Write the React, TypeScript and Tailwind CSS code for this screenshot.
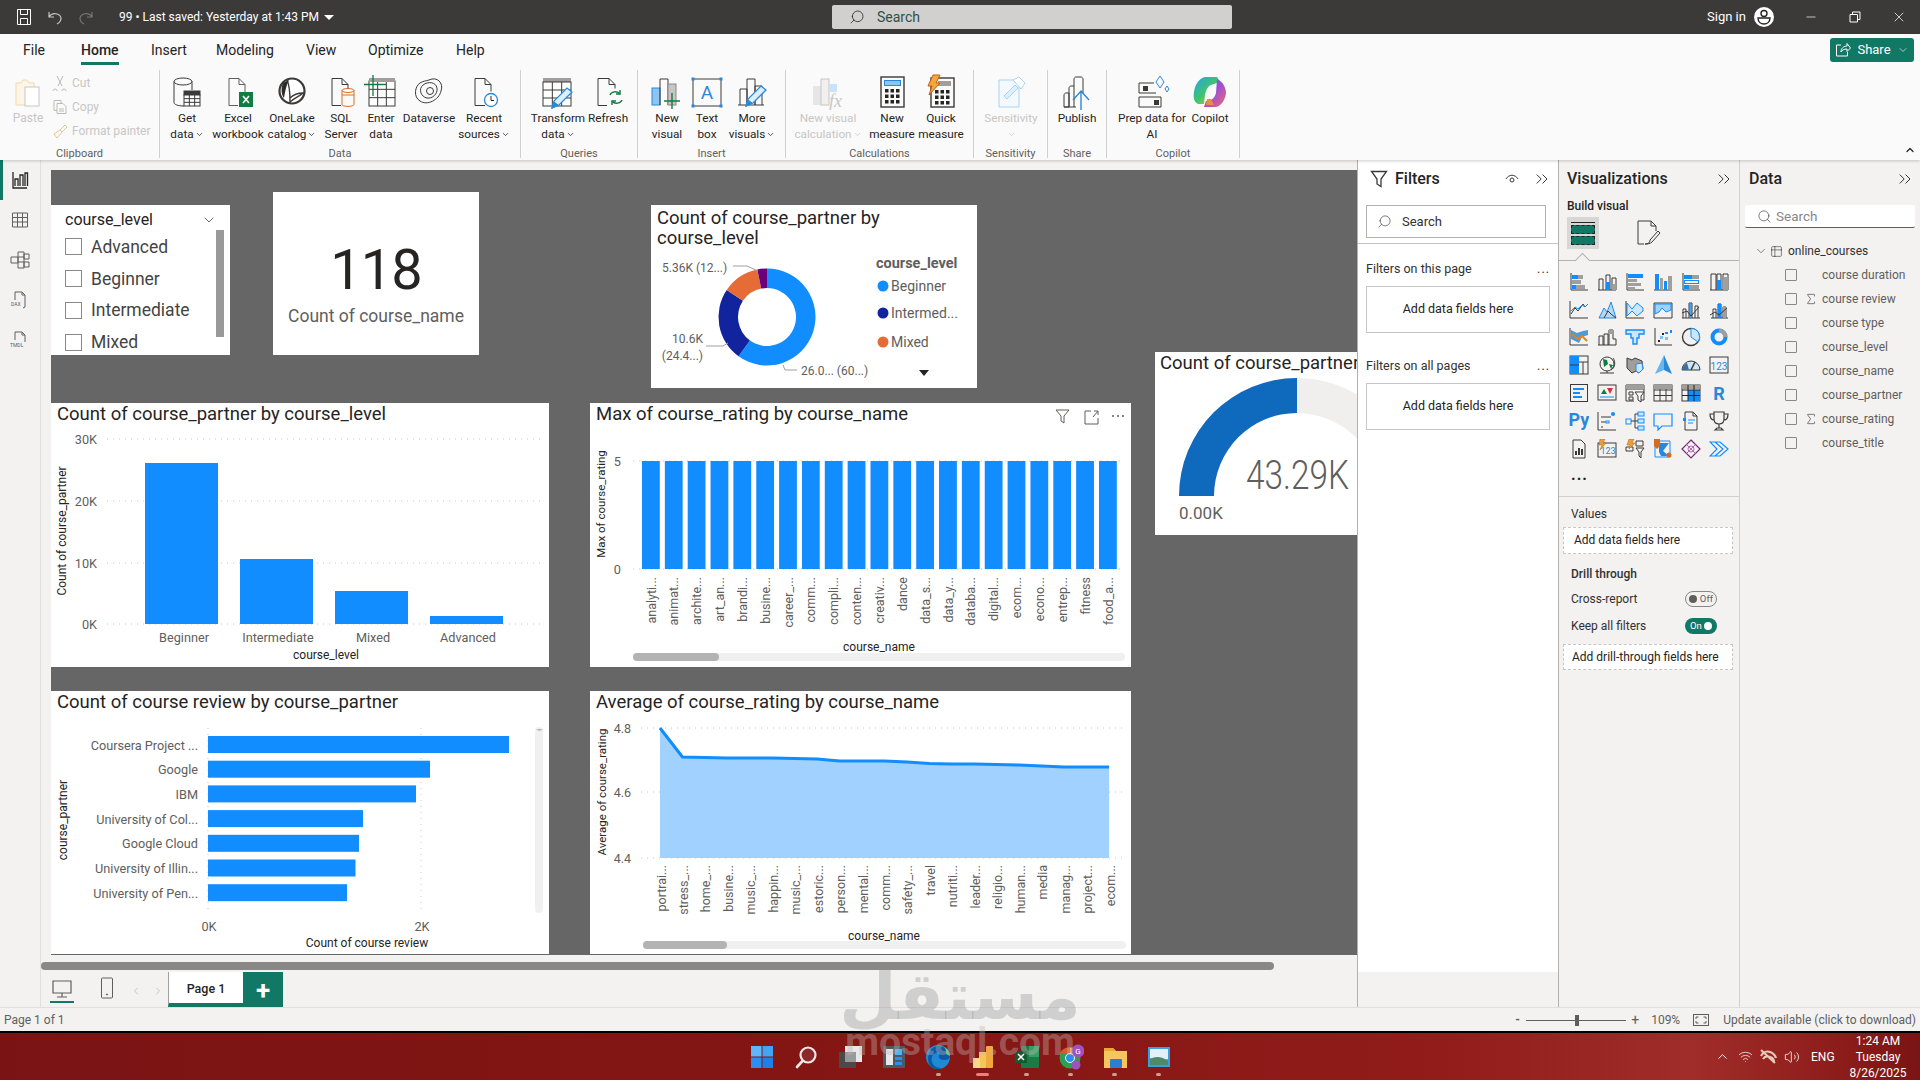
import type { ReactNode } from "react";
import {
  ChevronDown,
  ChevronRight,
  ChevronUp,
  ChevronsRight,
  Minus,
  Search as SearchIcon,
  Sigma,
  Table2,
  Volume2,
  Wifi,
  X,
} from "lucide-react";

const BLUE = "#118dff";
const INK = "#3b3a39";
const FRAME = "#2b88d8";
const GRAY = "#a19f9d";

/* ---------- ribbon icons ---------- */

function Ico({ children }: { children: ReactNode }) {
  return (
    <svg width="36" height="36" viewBox="0 0 36 36" fill="none" stroke={INK} strokeWidth="1">
      {children}
    </svg>
  );
}

const Cells = ({ x, y, w, h, n, m }: { x: number; y: number; w: number; h: number; n: number; m: number }) => (
  <g>
    <rect x={x} y={y} width={w} height={h} fill="#fff" />
    {Array.from({ length: n - 1 }, (_, i) => (
      <path key={i} d={`M${x + ((i + 1) * w) / n} ${y}v${h}`} />
    ))}
    {Array.from({ length: m - 1 }, (_, i) => (
      <path key={i} d={`M${x} ${y + ((i + 1) * h) / m}h${w}`} />
    ))}
  </g>
);

const Pencil = ({ x = 0, y = 0 }: { x?: number; y?: number }) => (
  <g transform={`translate(${x} ${y})`}>
    <path d="M13 32l2-7L28 12l5 4-13 13z" fill="#dcefff" stroke={FRAME} strokeWidth="1.3" />
    <path d="M13 32l2-6 4 3z" fill={FRAME} stroke={FRAME} />
  </g>
);

const Bars = ({ c = INK }: { c?: string }) => (
  <path d="M6 31V15h7v16M13 31V5h8v26M21 31V12h7v19M4 31h26" stroke={c} />
);

const ribbonIcons: Record<string, ReactNode> = {
  paste: (
    <Ico>
      <path d="M6 9h5l2-3h4l2 3h5v22H6z" stroke="#f2d9a8" fill="#fdf6e8" />
      <rect x="15" y="13" width="14" height="19" stroke="#c8c6c4" fill="#fff" />
    </Ico>
  ),
  getData: (
    <Ico>
      <ellipse cx="14" cy="7.5" rx="9" ry="3.5" />
      <path d="M5 7.5v21c0 2 4 3.5 10 3.5M23 7.5V16" />
      <rect x="15" y="17" width="16" height="4" fill={INK} />
      <Cells x={15} y={21} w={16} h={11} n={3} m={3} />
    </Ico>
  ),
  excel: (
    <Ico>
      <path d="M9 4.5h10l6 6v10M19 4.5v6h6M9 4.5v27h9" stroke="#605e5c" />
      <rect x="19" y="18" width="14" height="15" fill="#107c41" stroke="none" />
      <path d="M23 22l6 7M29 22l-6 7" stroke="#fff" strokeWidth="1.6" />
    </Ico>
  ),
  onelake: (
    <Ico>
      <circle cx="18" cy="17" r="12.500" fill="#fff" strokeWidth="2.200" />
      <path d="M13 6c3 6 3 13 3 22 4-4 10-6 13-9-6 0-10 2-13 5" strokeWidth="1.400" />
      <path d="M9 9c-2 5-2 11 1 15 1-6 2-12 5-18z" fill="#2d2c2b" stroke="none" />
    </Ico>
  ),
  sql: (
    <Ico>
      <path d="M9 4.5h10l6 6v4M19 4.5v6h6M9 4.5v27h9" />
      <ellipse cx="25" cy="16.5" rx="6" ry="2" stroke="#d86c1e" />
      <path d="M19 16.5v14c0 2.500 12 2.500 12 0v-14M19 21h12" stroke="#d86c1e" />
    </Ico>
  ),
  enter: (
    <Ico>
      <Cells x={6} y={7} w={26} h={25} n={3} m={3} />
      <rect x="6" y="4" width="26" height="4" fill={GRAY} stroke="none" />
      <path d="M1 10.500h22M10 1v21" stroke="#107c41" strokeWidth="1.3" />
    </Ico>
  ),
  dataverse: (
    <Ico>
      <path d="M18 6c8-4 15 3 12 11-2 9-14 15-21 10-7-4-5-15 0-18 3-2 6-2 9-3z" />
      <path d="M12 11c5-4 13-3 14 3 1 6-5 11-10 10-6-1-9-9-4-13z" />
      <circle cx="19" cy="17" r="3.500" />
    </Ico>
  ),
  recent: (
    <Ico>
      <path d="M9 4.500h10l6 6v7M19 4.500v6h6M9 4.500v27h10" />
      <circle cx="25" cy="26" r="6.500" stroke={FRAME} strokeWidth="1.3" fill="#fff" />
      <path d="M25 22v4.500h3" stroke="#252423" />
    </Ico>
  ),
  transform: (
    <Ico>
      <rect x="3" y="4" width="28" height="4" fill={GRAY} stroke="none" />
      <Cells x={3} y={8} w={28} h={24} n={3} m={3} />
      <Pencil x={-1} y={2} />
    </Ico>
  ),
  refresh: (
    <Ico>
      <path d="M8 4.500h11l6 6v4M19 4.500v6h6M8 4.500v27h9" />
      <path d="M20 21c1-3 7-5 10-1M32 26c-1 3-7 5-10 1" stroke="#107c41" strokeWidth="1.400" />
      <path d="M30 16v4h-4M22 31v-4h4" stroke="#107c41" strokeWidth="1.400" />
    </Ico>
  ),
  newVisual: (
    <Ico>
      <rect x="3" y="14" width="8" height="17" fill="#8cc4f2" stroke={FRAME} />
      <path d="M11 31V5h8v26" />
      <rect x="19" y="10" width="8" height="21" fill="#c8c6c4" stroke="#8a8886" />
      <path d="M15 27h16M23 19v16" stroke="#107c41" strokeWidth="1.400" />
    </Ico>
  ),
  textBox: (
    <Ico>
      <rect x="4" y="5" width="28" height="27" />
      <g fill={FRAME} stroke="none">
        <rect x="2.500" y="3.500" width="3" height="3" />
        <rect x="30.500" y="3.500" width="3" height="3" />
        <rect x="2.500" y="30.500" width="3" height="3" />
        <rect x="30.500" y="30.500" width="3" height="3" />
      </g>
      <text x="18" y="25" textAnchor="middle" fontSize="19" fill={FRAME} stroke="none">A</text>
    </Ico>
  ),
  moreVisuals: (
    <Ico>
      <Bars />
      <Pencil x={-1} y={0} />
    </Ico>
  ),
  visualCalc: (
    <Ico>
      <rect x="3" y="12" width="8" height="19" fill="#e6e6e6" stroke="none" />
      <rect x="11" y="5" width="8" height="26" fill="#f0f0f0" stroke="#c8c6c4" />
      <rect x="19" y="10" width="8" height="8" fill="#c7e3fa" stroke="none" />
      <text x="19" y="33" fontSize="18" fontStyle="italic" fontFamily="Liberation Serif" fill="#c8c6c4" stroke="none">fx</text>
    </Ico>
  ),
  measure: (
    <Ico>
      <rect x="7" y="3" width="23" height="30" strokeWidth="1.400" />
      <rect x="10.500" y="6.500" width="16" height="5" fill="#8cc4f2" stroke={FRAME} />
      <g fill="#252423" stroke="none">
        {[15, 20.5, 26].flatMap((y) =>
          [11, 16.5, 22].map((x) => <rect key={`${x}-${y}`} x={x} y={y} width="3.500" height="3.500" />),
        )}
      </g>
    </Ico>
  ),
  quick: (
    <Ico>
      <rect x="8" y="4" width="23" height="29" strokeWidth="1.400" />
      <rect x="15" y="7" width="13" height="5" fill={GRAY} stroke="none" />
      <g fill="#252423" stroke="none">
        {[16, 21.5, 27].flatMap((y) =>
          [12, 17.5, 23].map((x) => <rect key={`${x}-${y}`} x={x} y={y} width="3.500" height="3.500" />),
        )}
      </g>
      <path d="M10 1h7l-4 8h4L6 21l3-9H5z" fill="#f2a93b" stroke="#c55a11" />
    </Ico>
  ),
  sensitivity: (
    <Ico>
      <path d="M6 6h15l5 4v23H6z" stroke="#a6d3f5" fill="#f3f9fe" />
      <path d="M11 22l11-11 3 3-11 11z" stroke="#a6d3f5" fill="#deeefb" />
      <path d="M20 6l6-3 6 6-4 6z" stroke="#a6d3f5" fill="#fff" />
    </Ico>
  ),
  publish: (
    <Ico>
      <path d="M5 33V21c0-1 1-2 2-2h3v14zM10 33V14c0-1 1-2 2-2h3v21M15 12V5c0-1 1-2 2-2h5c1 0 2 1 2 2v14M5 33h12" />
      <path d="M22 36V17M14 26l8-9 8 9" stroke={FRAME} strokeWidth="1.400" />
    </Ico>
  ),
  prep: (
    <Ico>
      <path d="M5 9h15M5 9v10h17M5 23h22v10H5z" />
      <rect x="9" y="12" width="5" height="5" fill="#3b3a39" stroke="none" />
      <rect x="20" y="26" width="5" height="5" fill="#3b3a39" stroke="none" />
      <path d="M26 2l4 6-4 6-4-6zM33 12l2 3-2 3-2-3z" stroke={FRAME} />
    </Ico>
  ),
  copilot: (
    <svg width="36" height="36" viewBox="0 0 36 36">
      <defs>
        <linearGradient id="cp1" x1="0" y1="0" x2="1" y2="1">
          <stop offset="0" stopColor="#2aa0f0" />
          <stop offset="0.500" stopColor="#3ec46d" />
          <stop offset="1" stopColor="#f6c02c" />
        </linearGradient>
        <linearGradient id="cp2" x1="0" y1="0" x2="1" y2="1">
          <stop offset="0" stopColor="#3a6ff0" />
          <stop offset="0.500" stopColor="#a24fd0" />
          <stop offset="1" stopColor="#ef6c6c" />
        </linearGradient>
      </defs>
      <path d="M14 3h11l3 5-9 3c-4 2-5 6-6 10l-1 9H6c-4-2-5-7-4-12C3 10 8 3 14 3z" fill="url(#cp1)" />
      <path d="M25 5c4 2 8 5 9 13 0 7-5 15-11 15H12l2-6c5 0 9-3 10-8l1-14z" fill="url(#cp2)" />
      <path d="M14 31h8l-3-6h-4z" fill="#f08a3c" />
    </svg>
  ),
};

/* ---------- ribbon ---------- */

type RibbonItem = { key: string; w: string; lines: string[]; chev?: boolean; off?: boolean };
type RibbonGroup = { label: string; w: string; pl: string; items: RibbonItem[] };

const groups: RibbonGroup[] = [
  {
    label: "Data",
    w: "w-[361px]",
    pl: "pl-[2px]",
    items: [
      { key: "getData", w: "w-[50px]", lines: ["Get", "data"], chev: true },
      { key: "excel", w: "w-[52px]", lines: ["Excel", "workbook"] },
      { key: "onelake", w: "w-[56px]", lines: ["OneLake", "catalog"], chev: true },
      { key: "sql", w: "w-[42px]", lines: ["SQL", "Server"] },
      { key: "enter", w: "w-[38px]", lines: ["Enter", "data"] },
      { key: "dataverse", w: "w-[58px]", lines: ["Dataverse"] },
      { key: "recent", w: "w-[52px]", lines: ["Recent", "sources"], chev: true },
    ],
  },
  {
    label: "Queries",
    w: "w-[117px]",
    pl: "pl-[5px]",
    items: [
      { key: "transform", w: "w-[64px]", lines: ["Transform", "data"], chev: true },
      { key: "refresh", w: "w-[36px]", lines: ["Refresh"] },
    ],
  },
  {
    label: "Insert",
    w: "w-[148px]",
    pl: "pl-[9px]",
    items: [
      { key: "newVisual", w: "w-[40px]", lines: ["New", "visual"] },
      { key: "textBox", w: "w-[40px]", lines: ["Text", "box"] },
      { key: "moreVisuals", w: "w-[50px]", lines: ["More", "visuals"], chev: true },
    ],
  },
  {
    label: "Calculations",
    w: "w-[188px]",
    pl: "pl-[6px]",
    items: [
      { key: "visualCalc", w: "w-[72px]", lines: ["New visual", "calculation"], chev: true, off: true },
      { key: "measure", w: "w-[56px]", lines: ["New", "measure"] },
      { key: "quick", w: "w-[42px]", lines: ["Quick", "measure"] },
    ],
  },
  {
    label: "Sensitivity",
    w: "w-[74px]",
    pl: "pl-[3px]",
    items: [{ key: "sensitivity", w: "w-[68px]", lines: ["Sensitivity", ""], chev: true, off: true }],
  },
  {
    label: "Share",
    w: "w-[59px]",
    pl: "pl-[2px]",
    items: [{ key: "publish", w: "w-[54px]", lines: ["Publish"] }],
  },
  {
    label: "Copilot",
    w: "w-[133px]",
    pl: "pl-[6px]",
    items: [
      { key: "prep", w: "w-[78px]", lines: ["Prep data for", "AI"] },
      { key: "copilot", w: "w-[38px]", lines: ["Copilot"] },
    ],
  },
];

function Group({ label, w, children }: { label: string; w: string; children: ReactNode }) {
  return (
    <div className={`flex h-[88px] shrink-0 flex-col border-r border-[#d2d0ce] ${w}`}>
      <div className="flex h-[77px] shrink-0">{children}</div>
      <div className="h-[11px] text-center text-[11px] leading-[14px] text-[#605e5c]">{label}</div>
    </div>
  );
}

function Item({ item }: { item: RibbonItem }) {
  return (
    <div className={`flex shrink-0 flex-col items-center pt-[4px] ${item.w}`}>
      {ribbonIcons[item.key]}
      <div className={`text-center text-[11.750px] leading-[16px] whitespace-nowrap ${item.off ? "text-[#c8c6c4]" : "text-[#252423]"}`}>
        {item.lines.map((l, i) => (
          <div key={i} className="h-[16px]">
            {l}
            {item.chev && i === item.lines.length - 1 && <ChevronDown size={9} className="ml-[1px] inline" />}
          </div>
        ))}
      </div>
    </div>
  );
}

function TitleBar() {
  return (
    <div className="flex h-[34px] shrink-0 items-center bg-[#3b3a39] text-white">
      <svg width="16" height="18" viewBox="0 0 16 18" fill="none" stroke="#fff" className="ml-[16px]">
        <path d="M1.500 1.500h13v15h-13zM4.500 1.500v5h7v-5M4.500 16.500v-6h7v6" />
      </svg>
      <svg width="16" height="16" viewBox="0 0 16 16" fill="none" stroke="#c8c6c4" strokeWidth="1.200" className="ml-[15px]">
        <path d="M2 3v5h5M2 8c3-5 11-4 12 1 0 3-2 5-4 6" />
      </svg>
      <svg width="16" height="16" viewBox="0 0 16 16" fill="none" stroke="#777" strokeWidth="1.200" className="ml-[15px]">
        <path d="M14 3v5H9M14 8C11 3 3 4 2 9c0 3 2 5 4 6" />
      </svg>
      <div className="ml-[25px] w-[198px] text-[12px] whitespace-nowrap">99 • Last saved: Yesterday at 1:43 PM</div>
      <div className="ml-[7px] h-0 w-0 border-x-[5px] border-t-[5px] border-x-transparent border-t-white" />
      <div className="ml-[498px] flex h-[24px] w-[400px] items-center rounded-[2px] bg-[#d2d0ce] pl-[17px]">
        <SearchIcon size={16} strokeWidth={1.200} className="-scale-x-100 text-[#252423]" />
        <span className="ml-[12px] text-[14px] text-[#2f4f46]">Search</span>
      </div>
      <span className="ml-[475px] text-[13px]">Sign in</span>
      <svg width="20" height="20" viewBox="0 0 20 20" className="ml-[8px]">
        <circle cx="10" cy="10" r="10" fill="#fff" />
        <circle cx="10" cy="6.500" r="3" fill="none" stroke="#252423" strokeWidth="1.400" />
        <path d="M4 11h12c0 4-3 6-6 6s-6-2-6-6z" fill="none" stroke="#252423" strokeWidth="1.400" />
      </svg>
      <Minus size={14} strokeWidth={1.200} className="ml-[30px]" />
      <svg width="12" height="12" viewBox="0 0 12 12" fill="none" stroke="#fff" className="ml-[31px]">
        <path d="M1 3.500h7.500v7.500H1zM3.500 3.500V1H11v7.500H8.500" />
      </svg>
      <X size={16} strokeWidth={1.100} className="ml-[30px]" />
    </div>
  );
}

function Ribbon() {
  const tabs = [
    ["File", "w-[58px]"],
    ["Home", "w-[70px]"],
    ["Insert", "w-[65px]"],
    ["Modeling", "w-[90px]"],
    ["View", "w-[62px]"],
    ["Optimize", "w-[88px]"],
    ["Help", "w-[50px]"],
  ];
  return (
    <div className="relative z-10 h-[126px] shrink-0 bg-[#fafafa] shadow-[0_1px_3px_rgba(0,0,0,0.2)]">
      <div className="flex h-[36px] items-start pl-[23px]">
        {tabs.map(([t, w]) => (
          <div key={t} className={`${w} h-[31px] shrink-0`}>
            <div
              className={`inline-block h-[31px] pt-[7px] text-[14px] leading-[18px] text-[#252423] ${
                t === "Home" ? "border-b-[3px] border-[#117865] font-medium" : ""
              }`}
            >
              {t}
            </div>
          </div>
        ))}
        <div className="mt-[4px] ml-auto mr-[6px] flex h-[24px] w-[84px] items-center justify-center gap-[6px] rounded-[3px] bg-[#117865] text-[13px] text-white">
          <svg width="16" height="16" viewBox="0 0 16 16" fill="none" stroke="#fff">
            <path d="M6 3H1.500v11h11V10M6 10c0-4 3-6 6-6V1.500L15.500 6 12 9.500V7C9 7 7 8 6 10z" />
          </svg>
          Share
          <ChevronDown size={12} strokeWidth={1.200} />
        </div>
      </div>
      <div className="flex">
        <Group label="Clipboard" w="w-[160px]">
          <div className="flex w-[50px] shrink-0 flex-col items-center pt-[4px] pl-[6px] text-[12px] leading-[16px] text-[#c8c6c4]">
            {ribbonIcons.paste}
            Paste
          </div>
          <div className="flex flex-col pt-px pl-[2px] text-[12px] text-[#c8c6c4]">
            {["Cut", "Copy", "Format painter"].map((t, i) => (
              <div key={t} className="flex h-[24px] items-center gap-[4px]">
                <svg width="16" height="16" viewBox="0 0 16 16" fill="none" stroke={i === 2 ? "#e3c49a" : "#bcbbb9"}>
                  {i === 0 && <path d="M5 1l5 10M11 1L6 11M3 14a2 2 0 1 0 .1 0M12 14a2 2 0 1 0 .1 0" />}
                  {i === 1 && <path d="M2 1.500h7v3M5 4.500h6l3 3v7H5zM2 1.500v10h3M7 10h5M7 12h5" />}
                  {i === 2 && <path d="M8 7l5-5 2 2-5 5zM8 7L2 11l3 4 5-6" />}
                </svg>
                {t}
              </div>
            ))}
          </div>
        </Group>
        {groups.map((g) => (
          <Group key={g.label} label={g.label} w={g.w}>
            <div className={`flex ${g.pl}`}>
              {g.items.map((it) => (
                <Item key={it.key} item={it} />
              ))}
            </div>
          </Group>
        ))}
        <ChevronUp size={12} strokeWidth={2.500} className="ml-auto mt-[74px] mr-[4px] text-[#252423]" />
      </div>
    </div>
  );
}

/* ---------- chart helpers ---------- */

function T({
  x,
  y,
  s = 12.7,
  a = "start",
  c = "#605e5c",
  w = 400,
  v = false,
  children,
}: {
  x: number;
  y: number;
  s?: number;
  a?: "start" | "middle" | "end";
  c?: string;
  w?: number;
  v?: boolean;
  children: ReactNode;
}) {
  return (
    <text
      x={x}
      y={y}
      fontSize={s}
      textAnchor={a}
      dominantBaseline="central"
      fill={c}
      fontWeight={w}
      transform={v ? `rotate(-90 ${x} ${y})` : undefined}
    >
      {children}
    </text>
  );
}

const Grid = ({ x1, x2, y }: { x1: number; x2: number; y: number }) => (
  <path d={`M${x1} ${y}H${x2}`} stroke="#c8c6c4" strokeDasharray="1 5" />
);

function arc(cx: number, cy: number, r0: number, r1: number, a0: number, a1: number) {
  const p = (r: number, a: number) => `${cx + r * Math.sin(a)} ${cy - r * Math.cos(a)}`;
  const large = a1 - a0 > Math.PI ? 1 : 0;
  return `M${p(r1, a0)}A${r1} ${r1} 0 ${large} 1 ${p(r1, a1)}L${p(r0, a1)}A${r0} ${r0} 0 ${large} 0 ${p(r0, a0)}Z`;
}

/* Visuals live on the report canvas, so their place on it is free-form. SVGs use page coordinates. */
function Visual({ pos, box, children }: { pos: string; box: string; children: ReactNode }) {
  return (
    <div className={`absolute bg-white ${pos}`}>
      <svg className="block h-full w-full" viewBox={box}>
        {children}
      </svg>
    </div>
  );
}

function ColumnChart() {
  const bars = [
    [145, 463],
    [240, 559],
    [335, 591],
    [430, 616],
  ];
  return (
    <Visual pos="left-0 top-[233px] h-[264px] w-[498px]" box="51 403 498 264">
      <T x={57} y={414} s={18.5} c="#252423">Count of course_partner by course_level</T>
      {[[439, "30K"], [501, "20K"], [563, "10K"], [624, "0K"]].map(([y, l]) => (
        <g key={l}>
          <Grid x1={107} x2={545} y={y as number} />
          <T x={97} y={y as number} a="end">{l}</T>
        </g>
      ))}
      {bars.map(([x, y]) => (
        <rect key={x} x={x} y={y} width="73" height={624 - y} fill={BLUE} />
      ))}
      {[[184, "Beginner"], [278, "Intermediate"], [373, "Mixed"], [468, "Advanced"]].map(([x, l]) => (
        <T key={l} x={x as number} y={637} a="middle">{l}</T>
      ))}
      <T x={326} y={655} a="middle" s={12} c="#252423">course_level</T>
      <T x={62} y={531} a="middle" s={12} c="#252423" v>Count of course_partner</T>
    </Visual>
  );
}

function DonutCard() {
  const cx = 767;
  const cy = 317;
  const slices: [number, number, string][] = [
    [0, 0.6, BLUE],
    [0.6, 0.844, "#12239e"],
    [0.844, 0.968, "#e66c37"],
    [0.968, 1, "#6b007b"],
  ];
  const tau = Math.PI * 2;
  return (
    <Visual pos="left-[600px] top-[35px] h-[183px] w-[326px]" box="651 205 326 183">
      <T x={657} y={218} s={18.5} c="#252423">Count of course_partner by</T>
      <T x={657} y={238} s={18.5} c="#252423">course_level</T>
      {slices.map(([a, b, c]) => (
        <path key={c} d={arc(cx, cy, 29, 48.5, a * tau, b * tau)} fill={c} />
      ))}
      <T x={662} y={268} s={12}>5.36K (12...)</T>
      <path d="M733 266h14l11 5" stroke="#a19f9d" fill="none" />
      <T x={703} y={339} a="end" s={12}>10.6K</T>
      <T x={703} y={356} a="end" s={12}>(24.4...)</T>
      <path d="M706 346h17l5-3" stroke="#a19f9d" fill="none" />
      <T x={801} y={371} s={12}>26.0... (60...)</T>
      <path d="M783 365l2 5h12" stroke="#a19f9d" fill="none" />
      <T x={876} y={263} s={14.5} w={700} c="#605e5c">course_level</T>
      {[
        [286, BLUE, "Beginner"],
        [313, "#12239e", "Intermed..."],
        [342, "#e66c37", "Mixed"],
      ].map(([y, c, l]) => (
        <g key={l}>
          <circle cx={883} cy={y as number} r="5.500" fill={c as string} />
          <T x={891} y={y as number} s={14}>{l}</T>
        </g>
      ))}
      <path d="M919 370h10l-5 6z" fill="#252423" />
    </Visual>
  );
}

const maxLabels = [
  "analyti...", "animat...", "archite...", "art_an...", "brandi...", "busine...", "career_...",
  "comm...", "compli...", "conten...", "creativ...", "dance", "data_s...", "data_y...",
  "databa...", "digital...", "ecom...", "econo...", "entrep...", "fitness", "food_a...",
];

function MaxChart() {
  return (
    <Visual pos="left-[539px] top-[233px] h-[264px] w-[541px]" box="590 403 541 264">
      <T x={596} y={414} s={18.5} c="#252423">Max of course_rating by course_name</T>
      <path d="M1056 410h13l-5 6v7l-3-2v-5z" fill="none" stroke="#605e5c" />
      <path d="M1085 411h6M1085 411v13h13v-6M1093 417l5-6M1094 411h4v4" fill="none" stroke="#605e5c" />
      <g fill="#605e5c">
        <circle cx="1113" cy="416" r="1" />
        <circle cx="1118" cy="416" r="1" />
        <circle cx="1123" cy="416" r="1" />
      </g>
      <Grid x1={633} x2={1123} y={461} />
      <Grid x1={633} x2={1123} y={569} />
      <T x={621} y={461} a="end">5</T>
      <T x={621} y={569} a="end">0</T>
      <T x={601} y={504} a="middle" s={11.5} c="#252423" v>Max of course_rating</T>
      {maxLabels.map((l, i) => {
        const x = 642 + i * 22.85;
        return (
          <g key={i}>
            <rect x={x} y={461} width="17.800" height="108" fill={BLUE} />
            <T x={x + 9} y={577} a="end" s={12.5} v>{l}</T>
          </g>
        );
      })}
      <T x={879} y={647} a="middle" s={12} c="#252423">course_name</T>
      <rect x="633" y="653" width="492" height="8" rx="4" fill="#f0f0f0" />
      <rect x="633" y="653" width="86" height="8" rx="4" fill="#b3b3b3" />
    </Visual>
  );
}

function GaugeCard() {
  const tau = Math.PI * 2;
  return (
    <Visual pos="left-[1104px] top-[182px] h-[183px] w-[326px]" box="1155 352 326 183">
      <T x={1160} y={363} s={18.5} c="#252423">Count of course_partner by course_level</T>
      <path d={arc(1297, 496, 83, 118, -tau / 4, tau / 4)} fill="#f1efee" />
      <path d={arc(1297, 496, 83, 118, -tau / 4, 0)} fill="#0f69bd" />
      {/* the gauge figure is much narrower than Roboto, so squeeze it to the measured width */}
      <text
        x={1246}
        y={475}
        fontSize={41}
        fontWeight={300}
        fill="#605e5c"
        dominantBaseline="central"
        textLength={103}
        lengthAdjust="spacingAndGlyphs"
      >
        43.29K
      </text>
      <T x={1179} y={513} s={17}>0.00K</T>
    </Visual>
  );
}

function PartnerChart() {
  const rows: [string, number][] = [
    ["Coursera Project ...", 509],
    ["Google", 430],
    ["IBM", 416],
    ["University of Col...", 363],
    ["Google Cloud", 359],
    ["University of Illin...", 355.5],
    ["University of Pen...", 347],
  ];
  return (
    <Visual pos="left-0 top-[521px] h-[263px] w-[498px]" box="51 691 498 263">
      <T x={57} y={702} s={18.5} c="#252423">Count of course review by course_partner</T>
      <path d="M208 728v185M421 728v185" stroke="#c8c6c4" strokeDasharray="1 5" />
      {rows.map(([l, r], i) => (
        <g key={l}>
          <rect x={208} y={736 + i * 24.7} width={r - 208} height="17" fill={BLUE} />
          <T x={198} y={745 + i * 24.7} a="end" s={12.7}>{l}</T>
        </g>
      ))}
      <T x={209} y={926} a="middle">0K</T>
      <T x={422} y={926} a="middle">2K</T>
      <T x={367} y={943} a="middle" s={12} c="#252423">Count of course review</T>
      <T x={63} y={820} a="middle" s={12} c="#252423" v>course_partner</T>
      <rect x="535" y="727" width="8" height="186" rx="4" fill="#f0f0f0" />
      <path d="M536 729h7l-3.500 2z" fill="#b3b3b3" />
    </Visual>
  );
}

const areaLabels = [
  "portrai...", "stress_...", "home_...", "busine...", "music_...", "happin...", "music_...",
  "estoric...", "person...", "mental...", "comm...", "safety_...", "travel", "nutriti...",
  "leader...", "religio...", "human...", "media", "manag...", "project...", "ecom...",
];
const areaY = [728, 757, 757.5, 758, 758, 758, 758.5, 759, 761, 761, 761, 762, 763.5, 764, 764, 764.5, 765, 766, 767, 767, 767];

function AreaChart() {
  const xs = areaY.map((_, i) => 660 + i * 22.45);
  const line = areaY.map((y, i) => `${i ? "L" : "M"}${xs[i]} ${y}`).join("");
  return (
    <Visual pos="left-[539px] top-[521px] h-[263px] w-[541px]" box="590 691 541 263">
      <T x={596} y={702} s={18.5} c="#252423">Average of course_rating by course_name</T>
      {[[728, "4.8"], [792, "4.6"], [858, "4.4"]].map(([y, l]) => (
        <g key={l}>
          <Grid x1={641} x2={1124} y={y as number} />
          <T x={631} y={y as number} a="end" s={12.5}>{l}</T>
        </g>
      ))}
      <path d={`${line}L1109 858L660 858Z`} fill="#a0d1ff" />
      <path d={line} fill="none" stroke={BLUE} strokeWidth="3" />
      <T x={602} y={792} a="middle" s={11.5} c="#252423" v>Average of course_rating</T>
      {areaLabels.map((l, i) => (
        <T key={i} x={xs[i] + 1} y={865} a="end" s={12.5} v>{l}</T>
      ))}
      <T x={884} y={936} a="middle" s={12} c="#252423">course_name</T>
      <rect x="643" y="941" width="483" height="8" rx="4" fill="#f0f0f0" />
      <rect x="643" y="941" width="84" height="8" rx="4" fill="#b3b3b3" />
    </Visual>
  );
}

function Slicer() {
  return (
    <div className="absolute left-0 top-[35px] flex h-[150px] w-[179px] flex-col overflow-hidden bg-white pl-[14px] text-[#252423]">
      <div className="flex h-[26px] shrink-0 items-center pt-[4px] text-[16px]">
        course_level
        <ChevronDown size={16} strokeWidth={1} className="ml-[48px]" />
      </div>
      <div className="flex">
        <div className="flex w-[151px] flex-col">
          {["Advanced", "Beginner", "Intermediate", "Mixed"].map((l) => (
            <div key={l} className="flex h-[31.800px] items-center gap-[9px] text-[17.500px] text-[#444]">
              <span className="h-[17px] w-[17px] shrink-0 border border-[#8a8886]" />
              {l}
            </div>
          ))}
        </div>
        <div className="mt-[-1px] h-[107px] w-[8px] bg-[#999]" />
      </div>
    </div>
  );
}

function NumberCard() {
  return (
    <div className="absolute left-[222px] top-[22px] flex h-[163px] w-[206px] flex-col items-center bg-white pt-[44px]">
      <div className="text-[56px] leading-[68px] tracking-[-1px] text-[#252423]">118</div>
      <div className="mt-px text-[17.500px] leading-[22px] text-[#605e5c]">Count of course_name</div>
    </div>
  );
}

/* ---------- side panes ---------- */

function PaneTitle({ children, icon }: { children: ReactNode; icon?: ReactNode }) {
  return (
    <div className="flex h-[38px] shrink-0 items-center text-[16px] font-medium text-[#252423]">
      {icon}
      {children}
    </div>
  );
}

function FiltersPane() {
  const block = (title: string) => (
    <>
      <div className="flex items-center justify-between pr-[8px] text-[12.500px] text-[#323130]">
        <span>{title}</span>
        <span className="tracking-[1px]">...</span>
      </div>
      <div className="mt-[7px] flex h-[47px] w-[184px] items-center justify-center border border-[#c8c6c4] bg-white text-[12.500px] text-[#252423]">
        Add data fields here
      </div>
    </>
  );
  return (
    <div className="w-[202px] shrink-0 border-x border-x-[#b3b0ad] bg-[#f3f2f1]">
      <div className="h-[812px] bg-white">
        <div className="pl-[12px] pr-[12px]">
          <PaneTitle
            icon={
              <svg width="18" height="18" viewBox="0 0 18 18" fill="none" stroke={INK} strokeWidth="1.300" className="mr-[7px]">
                <path d="M1.500 1.500h15L11 9v7.500l-4-2.500V9z" />
              </svg>
            }
          >
            Filters
            <svg width="14" height="10" viewBox="0 0 14 10" fill="none" stroke={INK} className="ml-auto mr-[13px]">
              <path d="M1 5c3-5 9-5 12 0" />
              <circle cx="7" cy="6" r="2" />
            </svg>
            <ChevronsRight size={20} strokeWidth={1.100} className="-mr-[6px]" />
          </PaneTitle>
        </div>
        <div className="ml-[8px] mt-[7px] flex h-[33px] w-[180px] items-center border border-[#b3b0ad] pl-[10px] text-[13px] text-[#323130]">
          <SearchIcon size={15} strokeWidth={1} className="-scale-x-100" />
          <span className="ml-[10px]">Search</span>
        </div>
        <div className="mt-[5px] h-px bg-[#c8c6c4]" />
        <div className="pl-[8px] pt-[16px]">{block("Filters on this page")}</div>
        <div className="pl-[8px] pt-[24px]">{block("Filters on all pages")}</div>
      </div>
    </div>
  );
}

const s = { fill: "none", stroke: INK };
const b = { fill: BLUE, stroke: "none" };
const g = { fill: GRAY, stroke: "none" };
const f = { fill: "none", stroke: BLUE };

const vizIcons: ReactNode[] = [
  <><path {...s} d="M2 1v17h17" /><rect {...b} x="3" y="3" width="6" height="4" /><rect {...g} x="3" y="8" width="9" height="4" /><rect {...g} x="9" y="3" width="5" height="4" /><rect {...b} x="3" y="13" width="4" height="4" /><rect {...g} x="7" y="13" width="9" height="4" /></>,
  <><path {...s} d="M1 18h18M2 18V7h4v11M9 18V3h4v15M15 18V6h4v12" /><rect {...b} x="9" y="10" width="4" height="8" /><rect {...g} x="15" y="12" width="4" height="6" /></>,
  <><path {...s} d="M2 1v17h17" /><rect {...b} x="3" y="2" width="15" height="4" /><rect {...g} x="3" y="7" width="9" height="3" /><rect {...g} x="3" y="11" width="13" height="3" /><rect {...g} x="3" y="15" width="7" height="3" /></>,
  <><path {...s} d="M1 18h18" /><rect {...b} x="2" y="2" width="4" height="16" /><rect {...g} x="7" y="6" width="3" height="12" /><rect {...b} x="11" y="9" width="3" height="9" /><rect {...g} x="15" y="4" width="4" height="14" /></>,
  <><path {...s} d="M2 1v17h17" /><rect {...b} x="3" y="3" width="8" height="4" /><rect {...g} x="11" y="3" width="7" height="4" /><rect {...f} x="3.500" y="8.500" width="14" height="3" /><rect {...b} x="3" y="13" width="5" height="4" /><rect {...g} x="8" y="13" width="10" height="4" /></>,
  <><path {...s} d="M1 18h18M2 18V2h5v16M8 18V2h4v16M14 18V2h5v16" /><rect {...b} x="8" y="8" width="4" height="10" /><rect {...g} x="14" y="5" width="5" height="13" /></>,
  <><path {...s} d="M1 1v17h18M2 14l4-6 3 3 5-7 2 3 3-3" /><path {...f} d="M2 11l4-4 3 2 4-4 3 2 3-3" /></>,
  <><path d="M2 18l5-10 3 4 4-10 5 16z" fill="#b3d9f7" stroke={FRAME} /><path {...s} d="M7 18l4-7 3 3 5 4" /></>,
  <><path d="M2 3l5 6 5-6 6 5v3l-6 5-5-5-5 5z" fill="#cde6fb" stroke={BLUE} /><path {...s} d="M1 1v17h18" /></>,
  <><path {...s} d="M1 3h18v15H1z" /><path d="M2 4h16v6l-5 2-4-4-3 4-4 2z" fill="#a0d1ff" stroke={BLUE} /></>,
  <><path {...s} d="M2 18V9h3v9M8 18V3h3v15M14 18V6h3v12M1 18h18" /><rect {...b} x="8" y="3" width="3" height="15" opacity=".8" /><path {...s} d="M1 13l5-2 4 5 8-9" /></>,
  <><path {...s} d="M2 18h17M4 18V9h3v9M9 18V4h3v14M14 18V7h3v11" /><rect {...b} x="9" y="4" width="3" height="14" /><rect {...g} x="14" y="7" width="3" height="11" /><path {...s} d="M1 15l5-3 4 3 8-7" /></>,
  <><path {...s} d="M1 1v17h18" /><path d="M2 3l6 3 6-2 5-1v5l-6 2-3 6-8-4z" fill="#4a9bd9" /><path d="M3 7l6 5 4-3 5 5" stroke="#e6821e" strokeWidth="2" fill="none" /></>,
  <><path {...s} d="M1 18h18M2 18V9h4v9M7 18V7h4v11M12 18V3h4v9h3v6" /><rect {...g} x="12" y="3" width="4" height="4" /></>,
  <><path d="M1 3h18v4h-5v4h-2v6H8v-6H6V7H1z" fill="#cde6fb" stroke={BLUE} strokeWidth="1.400" /></>,
  <><path {...s} d="M2 1v17h17" /><g fill={BLUE}><rect x="12" y="5" width="3" height="2" /><rect x="7" y="9" width="3" height="3" opacity=".5" /><rect x="12" y="10" width="3" height="3" opacity=".5" /><rect x="17" y="3" width="2" height="3" /></g><g fill="#252423"><rect x="5" y="13" width="2" height="2" /><rect x="9" y="6" width="2" height="2" /></g></>,
  <><circle {...s} cx="10" cy="10" r="8.500" strokeWidth="1.400" /><path d="M10 10V1.500A8.500 8.500 0 0 1 17 15z" fill="#cde6fb" stroke={BLUE} /></>,
  <><circle cx="10" cy="10" r="6.500" fill="none" stroke={BLUE} strokeWidth="4" /><path d="M10 3.500a6.500 6.500 0 0 1 6.500 6.500" stroke={GRAY} strokeWidth="4" fill="none" /></>,
  <><rect {...s} x="1" y="1" width="18" height="18" /><rect x="1" y="1" width="9" height="18" fill={BLUE} /><path {...s} d="M1 10h9M10 7h9M14 7v12" /></>,
  <><circle {...s} cx="10" cy="9" r="7" /><path d="M6 4l4 1 1 4-4 3zM12 9l4 1-2 4z" fill="#107c41" /><path {...s} d="M3 18h14M10 16v2M16 3c3 4 2 10-2 12" /></>,
  <><path d="M2 3l5 2 3-2 7 3 1 8-4 4-3-2-4 2-5-5z" fill={GRAY} stroke={INK} /><path d="M11 9l6-1 1 6-4 4-3-2z" fill="#cde6fb" stroke={BLUE} /></>,
  <><path d="M11 0l8 19-8-4z" fill="#2b88d8" /><path d="M11 0L2 19l9-4z" fill="#6bb5ef" /></>,
  <><path d="M1 15a9 9 0 0 1 18 0z" fill="#cde6fb" stroke={INK} /><path d="M10 15l4-8" stroke={INK} strokeWidth="1.500" /><path d="M1 15a9 9 0 0 1 5-7l2 7z" fill="#3a6ea5" /></>,
  <><rect {...s} x="1" y="2" width="18" height="16" /><text x="10" y="14.500" textAnchor="middle" fontSize="10" fill={FRAME}>123</text></>,
  <><rect {...s} x="1.500" y="1.500" width="17" height="17" /><path {...f} strokeWidth="2" d="M4 6h11M4 10h7M4 14h9" /></>,
  <><rect {...s} x="1" y="2" width="18" height="15" /><path d="M4 11l3-5 3 5z" fill="#107c41" /><path d="M10 5h6l-3 6z" fill="#d13438" /><path {...f} d="M3 14h14" /></>,
  <><path {...s} d="M1 2h18v15h-6M1 2v16h8M1 6h18" /><rect {...g} x="1" y="2" width="18" height="4" /><path {...s} d="M4 9h4v3H4zM4 14h4v3H4z" /><path d="M10 9h9l-3 4v6l-3-2v-4z" fill="#fff" stroke={INK} /></>,
  <><rect {...s} x="1" y="2" width="18" height="16" /><path {...s} d="M1 7h18M1 12.500h18M7 2v16M13 2v16" /><rect {...g} x="1" y="2" width="18" height="4" /></>,
  <><rect {...s} x="1" y="2" width="18" height="16" /><rect x="7" y="7" width="12" height="11" fill={BLUE} /><rect {...g} x="1" y="2" width="18" height="4" /><path d="M1 7h18M1 12.500h18M7 2v16M13 2v16" stroke="#252423" /></>,
  <text x="10" y="17" textAnchor="middle" fontSize="18" fontWeight="700" fill={FRAME}>R</text>,
  <text x="10" y="15" textAnchor="middle" fontSize="18" fontWeight="700" fill={FRAME}>Py</text>,
  <><path {...s} d="M1 1v18h18M4 6h10M4 11h5M4 16h2" /><circle cx="16" cy="3" r="2" fill={BLUE} /><rect {...f} x="9" y="10" width="3" height="2" /></>,
  <><rect {...f} x="1" y="8" width="5" height="5" /><rect {...f} x="13" y="1" width="6" height="4" fill="#cde6fb" /><rect {...f} x="13" y="8" width="6" height="4" fill="#cde6fb" /><rect {...f} x="13" y="15" width="6" height="4" fill="#cde6fb" /><path {...s} d="M6 10h7M10 3v14M10 3h3M10 17h3" /></>,
  <path {...f} strokeWidth="1.200" d="M1 3h18v12H9l-4 4v-4H1z" />,
  <><path {...s} d="M4 1h8l4 4v14H4zM12 1v4h4" /><path {...f} d="M7 9h7M7 12h5" /><rect x="2" y="7" width="3" height="3" fill={BLUE} /></>,
  <><path {...s} d="M5 1h10v7c0 3-2 5-5 5s-5-2-5-5zM5 3H1c0 4 2 6 4 6M15 3h4c0 4-2 6-4 6M10 13v4M6 19h8l-2-2H8z" strokeWidth="1.200" /></>,
  <><path d="M4 1h8l4 4v14H4z" {...s} /><path d="M7 16v-4M10 16V9M13 16v-6" stroke={INK} strokeWidth="2" /></>,
  <><rect {...s} x="1" y="4" width="18" height="14" /><text x="11" y="15" textAnchor="middle" fontSize="9" fill={FRAME}>123</text><path d="M3 0h5L6 4h3l-6 7 2-5H2z" fill="#e6a03b" stroke="#c55a11" strokeWidth=".5" /></>,
  <><path {...s} d="M1 8h7v4H1zM11 2h7v5h-7zM11 9h8l-3 4v6l-2-2v-4z" /><path d="M4 0h5L7 4h3l-6 6 1-4H2z" fill="#e6a03b" stroke="#c55a11" strokeWidth=".5" /></>,
  <><path {...f} d="M2 2h15v16H2z" /><path d="M6 4h10L10 12l6 5H8l-2-4z" fill={FRAME} /><path d="M1 0h6v7L4 10 1 7z" fill="#d86c1e" /><circle cx="16" cy="16" r="2.500" fill="#d86c1e" /></>,
  <><path d="M10 1l9 9-9 9-9-9z" fill="none" stroke="#742774" strokeWidth="1.200" /><path d="M5.500 5.500l9 9M14.500 5.500l-9 9M7 10a3 3 0 1 0 6 0 3 3 0 1 0-6 0" fill="none" stroke="#b76cb7" /></>,
  <path d="M1 3h10l8 7-8 7H1l7-7zM6 3l8 7-8 7" fill="none" stroke={BLUE} strokeWidth="1.200" />,
];

function Toggle({ on }: { on: boolean }) {
  return on ? (
    <span className="flex h-[16px] w-[32px] items-center justify-between rounded-full bg-[#117865] px-[5px] text-[9.500px] text-white">
      On
      <span className="h-[8px] w-[8px] rounded-full bg-white" />
    </span>
  ) : (
    <span className="flex h-[16px] w-[32px] items-center justify-between rounded-full border border-[#8a8886] px-[3px] text-[9.500px] text-[#605e5c]">
      <span className="h-[8px] w-[8px] rounded-full bg-[#605e5c]" />
      Off
    </span>
  );
}

function VizPane() {
  return (
    <div className="w-[181px] shrink-0 border-r border-[#d2d0ce] bg-[#f3f2f1] text-[#323130]">
      <div className="pl-[8px] pr-[7px]">
        <PaneTitle>
          Visualizations
          <ChevronsRight size={20} strokeWidth={1.100} className="ml-auto -mr-[2px]" />
        </PaneTitle>
        <div className="h-[19px] text-[12px] font-medium leading-[16px] text-[#252423]">Build visual</div>
        <div className="flex h-[32px] items-center">
          <div className="flex h-[32px] w-[32px] flex-col items-center justify-center gap-[2px] bg-[#d9d7d5]">
            <span className="h-px w-[24px] bg-[#252423]" />
            <span className="h-[9px] w-[24px] border border-dashed border-[#252423] bg-[#117865]" />
            <span className="h-[9px] w-[24px] border border-dashed border-[#252423] bg-[#117865]" />
          </div>
          <svg width="26" height="26" viewBox="0 0 26 26" fill="none" stroke={INK} className="ml-[37px]">
            <path d="M2 1h13l5 5v5M15 1v5h5M2 1v23h6" />
            <path d="M9 24c3 0 5-1 5-4l8-9 2 2-8 9c-2 2-5 2-7 2z" />
          </svg>
        </div>
      </div>
      <div className="relative mt-[11px] h-px bg-[#b3b0ad]">
        <span className="absolute left-[18px] -top-[5px] h-[11px] w-[11px] rotate-45 border-l border-t border-[#b3b0ad] bg-[#f3f2f1]" />
      </div>
      <div className="ml-[6px] mt-[7px] grid grid-cols-[repeat(6,28px)] grid-rows-[repeat(7,27.8px)]">
        {vizIcons.map((ic, i) => (
          <div key={i} className="flex items-center justify-center">
            <svg width="20" height="20" viewBox="0 0 20 20">{ic}</svg>
          </div>
        ))}
      </div>
      <div className="h-[33px] pl-[12px] pt-[6px] text-[16px] font-bold leading-[12px] tracking-[1px] text-[#252423]">...</div>
      <div className="h-px bg-[#d2d0ce]" />
      <div className="px-[4px] pt-[9px] text-[12px]">
        <div className="h-[21px] pl-[8px] leading-[16px]">Values</div>
        <div className="flex h-[27px] w-[170px] items-center border border-dashed border-[#c8c6c4] bg-white pl-[10px] text-[#252423]">
          Add data fields here
        </div>
        <div className="mt-[12px] h-[20px] pl-[8px] font-medium leading-[16px]">Drill through</div>
        <div className="flex h-[27px] items-center justify-between pl-[8px] pr-[18px]">
          Cross-report
          <Toggle on={false} />
        </div>
        <div className="flex h-[27px] items-center justify-between pl-[8px] pr-[18px]">
          Keep all filters
          <Toggle on />
        </div>
        <div className="mt-[4px] flex h-[26px] w-[170px] items-center whitespace-nowrap border border-dashed border-[#c8c6c4] bg-white pl-[8px] text-[#252423]">
          Add drill-through fields here
        </div>
      </div>
    </div>
  );
}

function DataPane() {
  const fields: [string, boolean][] = [
    ["course duration", false],
    ["course review", true],
    ["course type", false],
    ["course_level", false],
    ["course_name", false],
    ["course_partner", false],
    ["course_rating", true],
    ["course_title", false],
  ];
  return (
    <div className="w-[180px] shrink-0 bg-[#f3f2f1] text-[#605e5c]">
      <div className="pl-[9px] pr-[7px]">
        <PaneTitle>
          Data
          <ChevronsRight size={20} strokeWidth={1.100} className="ml-auto -mr-[2px]" />
        </PaneTitle>
      </div>
      <div className="ml-[5px] mt-[7px] flex h-[23px] w-[170px] items-center rounded-[2px] border-b border-[#605e5c] bg-white pl-[12px] text-[13.500px] text-[#8a8886]">
        <SearchIcon size={15} strokeWidth={1} className="text-[#323130]" />
        <span className="ml-[4px]">Search</span>
      </div>
      <div className="mt-[11px] flex h-[24px] items-center pl-[14px] text-[12px] text-[#323130]">
        <ChevronDown size={14} strokeWidth={1} />
        <Table2 size={13} strokeWidth={1} className="ml-[2px] text-[#252423]" />
        <span className="ml-[5px]">online_courses</span>
      </div>
      {fields.map(([n, sum]) => (
        <div key={n} className="flex h-[24px] items-center pl-[45px] text-[12px]">
          <span className="h-[12px] w-[12px] shrink-0 rounded-[1px] border border-[#8a8886]" />
          <span className="flex w-[25px] justify-center pl-[2px]">
            {sum && <Sigma size={14} strokeWidth={1} className="text-[#252423]" />}
          </span>
          {n}
        </div>
      ))}
    </div>
  );
}

function Center() {
  return (
    <div className="flex w-[1316px] shrink-0 flex-col bg-[#f3f2f1]">
      <div className="h-[802px] pl-[10px] pt-[10px] pb-[7px]">
        <div className="relative h-full overflow-hidden bg-[#666]">
          <Slicer />
          <NumberCard />
          <DonutCard />
          <ColumnChart />
          <MaxChart />
          <GaugeCard />
          <PartnerChart />
          <AreaChart />
        </div>
      </div>
      <div className="h-[8px] w-[1233px] rounded-full bg-[#8a8886]" />
      <div className="flex h-[37px] items-end">
        <div className="mb-[4px] ml-[4px] flex h-[32px] w-[34px] flex-col items-center justify-end">
          <svg width="22" height="20" viewBox="0 0 22 20" fill="none" stroke="#605e5c" strokeWidth="1.200" className="mb-[2px]">
            <path d="M2 2h18v12H2zM11 14v4M6 18h10" />
          </svg>
          <span className="h-[2px] w-[24px] bg-[#117865]" />
        </div>
        <svg width="14" height="22" viewBox="0 0 14 22" fill="none" stroke="#605e5c" className="ml-[21px] mb-[8px]">
          <rect x="1.500" y="1" width="11" height="20" rx="1" />
          <circle cx="7" cy="17.500" r=".6" fill="#605e5c" />
        </svg>
        <ChevronRight size={12} strokeWidth={2} className="ml-[16px] mb-[10px] rotate-180 text-[#c8c6c4]" />
        <ChevronRight size={12} strokeWidth={2} className="ml-[10px] mb-[10px] text-[#c8c6c4]" />
        <div className="ml-[4px] flex h-[35px] w-[75px] items-center justify-center border-b-[4px] border-l border-b-[#117865] border-l-[#a19f9d] bg-white pt-[4px] text-[12.500px] font-medium text-[#252423]">
          Page 1
        </div>
        <div className="flex h-[35px] w-[40px] items-center justify-center bg-[#117865] text-[26px] font-bold leading-none text-white">
          +
        </div>
      </div>
    </div>
  );
}

function Rail() {
  const cls = "w-[20px] h-[20px]";
  return (
    <div className="w-[41px] shrink-0 border-r border-[#e1dfdd] bg-[#f3f2f1]">
      <div className="flex h-[40px] items-center justify-center border-l-[3px] border-[#117865] pr-[3px]">
        <svg className={cls} viewBox="0 0 20 20" fill="none" stroke="#252423">
          <path d="M3 2v16h14M5 16V9h3v7M10 16V5h3v11M15 16V3h2.500v13" strokeWidth="1.300" />
        </svg>
      </div>
      <div className="flex h-[40px] items-center justify-center">
        <svg className={cls} viewBox="0 0 20 20" fill="none" stroke="#605e5c">
          <path d="M2.500 3h15v14h-15zM2.500 7.500h15M2.500 12h15M7.500 3v14M12.500 3v14" />
        </svg>
      </div>
      <div className="flex h-[40px] items-center justify-center">
        <svg className={cls} viewBox="0 0 20 20" fill="none" stroke="#605e5c">
          <path d="M1 7h7v6H1zM8 2h6v16H8zM14 4h5v5h-5zM14 12h5v5h-5zM8 7h6M8 12h6" />
        </svg>
      </div>
      <div className="flex h-[40px] items-center justify-center">
        <svg className={cls} viewBox="0 0 20 20" fill="none" stroke="#605e5c">
          <path d="M5 10V2h7l3 3v12l-2 1M12 2v3h3" />
          <text x="1" y="16" fontSize="5" fill="#605e5c" stroke="none">DAX</text>
        </svg>
      </div>
      <div className="flex h-[40px] items-center justify-center">
        <svg className={cls} viewBox="0 0 20 20" fill="none" stroke="#605e5c">
          <path d="M5 10V2h7l3 3v7M12 2v3h3" />
          <text x="0" y="17" fontSize="5" fill="#605e5c" stroke="none">TMDL</text>
        </svg>
      </div>
    </div>
  );
}

function StatusBar() {
  return (
    <div className="flex h-[24px] shrink-0 items-center border-t border-[#e1dfdd] bg-[#f3f2f1] pl-[4px] pt-px text-[12px] text-[#605e5c]">
      Page 1 of 1
      <div className="ml-auto flex items-center pr-[4px]">
        <span className="w-[8px] font-bold">-</span>
        <div className="relative mx-[3px] h-px w-[100px] bg-[#605e5c]">
          <span className="absolute left-[49px] -top-[5px] h-[11px] w-[4px] bg-[#605e5c]" />
        </div>
        <span className="w-[12px] text-center text-[14px]">+</span>
        <span className="ml-[10px]">109%</span>
        <svg width="16" height="12" viewBox="0 0 16 12" fill="none" stroke="#605e5c" className="ml-[13px]">
          <rect x=".5" y=".5" width="15" height="11" />
          <path d="M3 5V3h2.500M13 5V3h-2.500M3 7v2h2.500M13 7v2h-2.500" />
        </svg>
        <span className="ml-[14px]">Update available (click to download)</span>
      </div>
    </div>
  );
}

const taskIcons: ReactNode[] = [
  <><rect x="2" y="2" width="10.500" height="10.500" fill="#5cb8fb" /><rect x="13.500" y="2" width="10.500" height="10.500" fill="#41a5f5" /><rect x="2" y="13.500" width="10.500" height="10.500" fill="#2a8fee" /><rect x="13.500" y="13.500" width="10.500" height="10.500" fill="#1b80e8" /></>,
  <><circle cx="15" cy="11" r="7.500" fill="#8b2a2a" stroke="#f2e6e6" strokeWidth="2.200" /><path d="M9.500 17L4 23" stroke="#f2e6e6" strokeWidth="2.600" strokeLinecap="round" /></>,
  <><rect x="2" y="8" width="17" height="16" fill="#4a4a4a" /><rect x="8" y="2" width="17" height="16" fill="#e8e8e8" /><rect x="8" y="8" width="11" height="10" fill="#999" /></>,
  <><rect x="2" y="2" width="22" height="22" rx="1" fill="#4b5a63" /><rect x="5" y="5" width="7" height="16" fill="#e8e8e8" /><rect x="14" y="5" width="7" height="6" fill="#4db3f2" /><rect x="14" y="13" width="7" height="3" fill="#2a8fee" /><rect x="14" y="18" width="7" height="3" fill="#2a8fee" /></>,
  <><circle cx="13" cy="13" r="12" fill="#1e8ad6" /><path d="M14 2c6 0 11 4 11 10 0 3-3 4-6 4-4 0-6-2-5-5 1-2 0-3-3-2-4 1-5 5-4 9 1 3 4 6 9 6 1 0-6 3-11-2C1 16 3 2 14 2z" fill="#0c5aa6" /><path d="M25 12c0-6-5-10-11-10 6 0 8 4 7 8z" fill="#4fd17f" /></>,
  <><rect x="16" y="2" width="7" height="22" rx="1" fill="#f2a93b" /><rect x="9" y="8" width="7" height="16" fill="#f6c65b" /><rect x="3" y="14" width="7" height="10" fill="#fad98b" /></>,
  <><rect x="7" y="2" width="18" height="22" rx="1" fill="#1c7a45" /><rect x="15" y="2" width="10" height="11" fill="#33a065" /><rect x="1" y="7" width="12" height="12" fill="#0e5c2f" /><path d="M4 10l6 6M10 10l-6 6" stroke="#fff" strokeWidth="1.500" /></>,
  <><circle cx="12" cy="14" r="10.500" fill="#2f9e4f" /><path d="M12 3.500a10.500 10.500 0 0 1 10 7H12z" fill="#f6c02c" /><path d="M2 9a10.500 10.500 0 0 1 10-5.500V10z" fill="#e0552f" /><circle cx="12" cy="14" r="4.500" fill="#2a8fee" stroke="#fff" /><circle cx="20" cy="7" r="6.500" fill="#a24fc0" /><circle cx="18" cy="21" r="4.500" fill="#a24fc0" /><text x="20" y="10" fontSize="8" textAnchor="middle" fill="#fff">G</text></>,
  <><path d="M2 4h9l3 3h11v17H2z" fill="#f6c65b" /><path d="M2 4h9l3 3H2z" fill="#e8a73a" /><rect x="8" y="15" width="12" height="9" rx="1" fill="#2a7fd0" /></>,
  <><rect x="2" y="3" width="22" height="20" fill="#3a9fe0" /><path d="M4 5h18v10l-9 2-9-3z" fill="#dff2fb" /><path d="M4 15c5-3 12-3 18 2v4H4z" fill="#4e8a6a" /></>,
];

function Taskbar() {
  return (
    <div className="flex h-[49px] shrink-0 items-center border-t-2 border-black bg-[linear-gradient(90deg,#7a1414,#841613_45%,#911c1a_75%,#a02d2a_88%,#8c1c1a_96%,#7a1414)] pl-[740px] text-white">
      {taskIcons.map((ic, i) => (
        <div key={i} className="relative flex h-[47px] w-[44.100px] shrink-0 items-center justify-center">
          <svg width="26" height="26" viewBox="0 0 26 26">{ic}</svg>
          {[4, 6, 7, 8, 9].includes(i) && (
            <span className="absolute bottom-[4px] h-[3px] w-[5px] rounded-full bg-[#c8a090]" />
          )}
          {i === 5 && (
            <span className="absolute bottom-[4px] h-[3px] w-[13px] rounded-full bg-[#ef7d7d]" />
          )}
        </div>
      ))}
      <div className="ml-auto flex items-center pr-[16px] text-[12px]">
        <ChevronUp size={15} strokeWidth={1.500} className="mx-[4px]" />
        <Wifi size={15} strokeWidth={1.400} className="mx-[4px] text-[#eedfdf]" />
        <svg width="17" height="15" viewBox="0 0 17 15" fill="none" stroke="#e7c9b8" strokeWidth="2.200" className="mx-[3px]">
          <path d="M1 7c2-4 6-5 9-4 3 1 5 3 6 6M3 10c2-3 5-3 7-2 2 0 4 2 4 5M1 1l14 13" />
        </svg>
        <Volume2 size={16} strokeWidth={1.200} className="mx-[4px]" />
        <span className="ml-[7px] w-[24px]">ENG</span>
        <div className="ml-[17px] flex w-[52px] flex-col items-center whitespace-nowrap leading-[16px]">
          <span>1:24 AM</span>
          <span>Tuesday</span>
          <span>8/26/2025</span>
        </div>
      </div>
    </div>
  );
}

export default function App() {
  return (
    <div className="relative flex h-[1080px] w-[1920px] flex-col overflow-hidden font-['Roboto',sans-serif]">
      <TitleBar />
      <Ribbon />
      <div className="flex h-[847px] shrink-0">
        <Rail />
        <Center />
        <FiltersPane />
        <VizPane />
        <DataPane />
      </div>
      <StatusBar />
      <Taskbar />
      {/* site watermark sitting over the capture */}
      <div className="pointer-events-none absolute bottom-[18px] left-[845px] z-20 flex w-[230px] flex-col items-center">
        <span className="font-['DejaVu_Sans',sans-serif] text-[66px] font-bold leading-[50px] text-[#8f8f8f]/35">مستقل</span>
        <span className="text-[39px] font-bold leading-[40px] text-[#c4b4b4]/40">mostaql.com</span>
      </div>
    </div>
  );
}
